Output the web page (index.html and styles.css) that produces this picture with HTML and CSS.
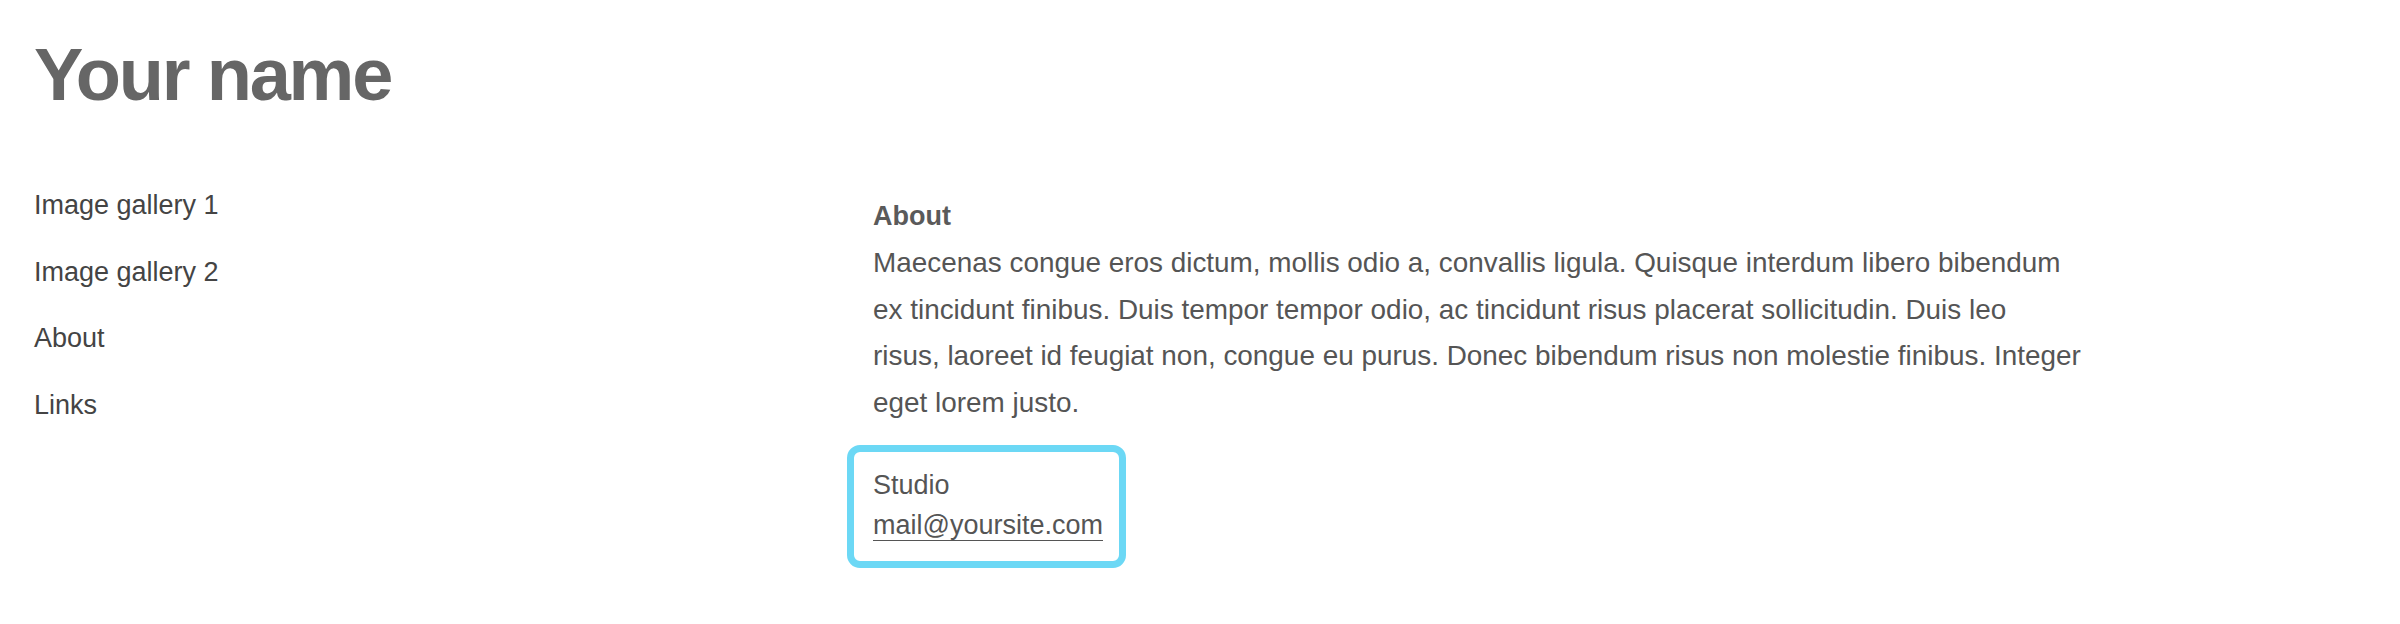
FILE: index.html
```html
<!DOCTYPE html>
<html lang="en">
<head>
<meta charset="utf-8">
<title>Your name</title>
<link rel="stylesheet" href="styles.css">
</head>
<body>
<header class="site-header">
  <h1 class="site-title">Your name</h1>
</header>
<div class="layout">
  <nav class="side-nav">
    <a class="nav-link" href="#">Image gallery 1</a>
    <a class="nav-link" href="#">Image gallery 2</a>
    <a class="nav-link" href="#">About</a>
    <a class="nav-link" href="#">Links</a>
  </nav>
  <main class="content">
    <p class="about-text"><strong class="about-title">About</strong><br>Maecenas congue eros dictum, mollis odio a, convallis ligula. Quisque interdum libero bibendum<br>ex tincidunt finibus. Duis tempor tempor odio, ac tincidunt risus placerat sollicitudin. Duis leo<br>risus, laoreet id feugiat non, congue eu purus. Donec bibendum risus non molestie finibus. Integer<br>eget lorem justo.</p>
    <address class="contact-box">
      <span class="contact-line">Studio</span>
      <a class="contact-mail" href="#">mail@yoursite.com</a>
    </address>
  </main>
</div>
</body>
</html>
```

FILE: styles.css
```css
html, body {
  margin: 0;
  padding: 0;
  background: #ffffff;
}

body {
  font-family: "Liberation Sans", Arial, Helvetica, sans-serif;
  color: #555555;
  padding-left: 34px;
}

.site-header {
  padding-top: 32px;
}

.site-title {
  margin: 0;
  font-size: 74px;
  line-height: 86px;
  font-weight: bold;
  letter-spacing: -2.2px;
  color: #666666;
}

.layout {
  display: grid;
  grid-template-columns: 839px 1260px;
  margin-top: 67px;
}

.side-nav {
  display: flex;
  flex-direction: column;
  gap: 26.67px;
}

.nav-link {
  font-size: 27px;
  line-height: 40px;
  color: #444444;
  text-decoration: none;
}

.content {
  padding-top: 8.4px;
}

.about-text {
  margin: 0;
  font-size: 27.9px;
  line-height: 46.67px;
  color: #555555;
}

.about-title {
  font-size: 27px;
  font-weight: bold;
  color: #5a5a5a;
}

.contact-box {
  display: flex;
  flex-direction: column;
  align-items: flex-start;
  width: fit-content;
  margin: 18px 0 0 -26px;
  padding: 14px 16px 20px 19px;
  border: 7px solid #6cd8f5;
  border-radius: 13px;
  font-style: normal;
  font-size: 27px;
  line-height: 39px;
  color: #555555;
}

.contact-line {
  display: block;
}

.contact-mail {
  color: #555555;
  text-decoration: none;
  line-height: 1;
  padding-bottom: 1px;
  border-bottom: 1px solid #555555;
  margin-top: 7px;
}
```
